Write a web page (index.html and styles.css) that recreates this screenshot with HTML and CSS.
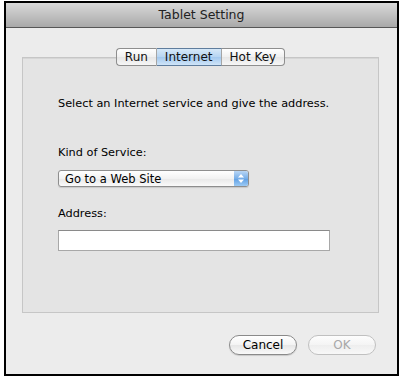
FILE: index.html
```html
<!DOCTYPE html>
<html>
<head>
<meta charset="utf-8">
<link rel="stylesheet" href="styles.css">
</head>
<body>
<div class="window">
  <div class="titlebar">Tablet Setting</div>
  <div class="content">
    <div class="tabs">
      <div class="tab">Run</div>
      <div class="tab selected">Internet</div>
      <div class="tab">Hot Key</div>
    </div>
    <div class="panel">
      <p class="intro">Select an Internet service and give the address.</p>
      <div class="label">Kind of Service:</div>
      <div class="popup">
        <span>Go to a Web Site</span>
        <span class="arrows">
          <svg width="8" height="11" viewBox="0 0 8 11"><path d="M4 1 L7 4.5 H1 Z M4 10 L7 6.5 H1 Z" fill="#fff"/></svg>
        </span>
      </div>
      <div class="label addr">Address:</div>
      <div class="field"></div>
    </div>
    <div class="buttons">
      <div class="btn">Cancel</div>
      <div class="btn disabled">OK</div>
    </div>
  </div>
</div>
</body>
</html>
```
FILE: styles.css
```css
html, body {
  margin: 0;
  padding: 0;
  background: #fff;
}
body {
  font-family: "DejaVu Sans", "Liberation Sans", sans-serif;
  font-size: 11.3px;
  color: #000;
}
.window {
  margin: 1px 0 0 4px;
  width: 391px;
  height: 371px;
  border: 2px solid #000;
  background: #ececec;
  display: flex;
  flex-direction: column;
}
.titlebar {
  height: 24px;
  line-height: 24px;
  text-align: center;
  font-size: 12.5px;
  color: #222;
  background: linear-gradient(#d9d9d9, #a9a9a9);
  border-bottom: 1px solid #575757;
}
.content {
  flex: 1;
  display: flex;
  flex-direction: column;
  padding: 20px 18px 0 16px;
}
.tabs {
  display: flex;
  justify-content: center;
  position: relative;
  z-index: 1;
  margin-bottom: -9px;
}
.tabs .tab {
  height: 16px;
  line-height: 16px;
  padding: 0 8px;
  background: linear-gradient(#ffffff, #f0f0f0 50%, #e6e6e6 51%, #f6f6f6);
  border-top: 1px solid #8e8e8e;
  border-bottom: 1px solid #8e8e8e;
  border-right: 1px solid #a5a5a5;
  font-size: 12px;
  color: #111;
}
.tabs .tab:first-child {
  border-left: 1px solid #8e8e8e;
  border-radius: 4px 0 0 4px;
}
.tabs .tab:last-child {
  border-radius: 0 4px 4px 0;
  border-right-color: #8e8e8e;
}
.tabs .tab.selected {
  background: linear-gradient(#d6e8f8, #b6d4f2 50%, #a2c8ee 51%, #cfe4f8);
  border-top-color: #5f7d9d;
  border-bottom-color: #5f7d9d;
}
.panel {
  height: 256px;
  box-sizing: border-box;
  background: #e4e4e4;
  border: 1px solid #c6c6c6;
  box-shadow: inset 0 1px 0 #d6d6d6;
  padding: 38px 0 0 35px;
}
.intro {
  margin: 0;
  line-height: 16px;
}
.label {
  margin-top: 33px;
  line-height: 16px;
}
.label.addr {
  margin-top: 19px;
}
.popup {
  box-sizing: border-box;
  margin-top: 9px;
  width: 191px;
  height: 17px;
  border: 1px solid #8e8e8e;
  border-radius: 3px;
  background: linear-gradient(#ffffff, #f2f2f2 50%, #e8e8e8 51%, #fafafa);
  display: flex;
  align-items: center;
  justify-content: space-between;
  padding-left: 6px;
  font-size: 11.5px;
  box-shadow: 0 1px 1px rgba(0,0,0,0.12);
}
.popup .arrows {
  width: 14px;
  height: 15px;
  border-radius: 0 2px 2px 0;
  background: linear-gradient(#b9d6f5, #77aee8 50%, #5f9fe4 51%, #9ccaf4);
  display: flex;
  align-items: center;
  justify-content: center;
}
.field {
  margin-top: 8px;
  width: 270px;
  height: 19px;
  background: #fff;
  border: 1px solid #a8a8a8;
  border-top-color: #8a8a8a;
}
.buttons {
  display: flex;
  justify-content: flex-end;
  gap: 11px;
  margin-top: 22px;
  padding-right: 3px;
}
.btn {
  width: 66px;
  height: 18px;
  line-height: 18px;
  text-align: center;
  border: 1px solid #8a8a8a;
  border-radius: 10px;
  background: linear-gradient(#ffffff, #f3f3f3 50%, #e6e6e6 51%, #f9f9f9);
  font-size: 12px;
  box-shadow: 0 1px 1px rgba(0,0,0,0.15);
}
.btn.disabled {
  color: #a8a8a8;
  border-color: #c0c0c0;
  background: linear-gradient(#fdfdfd, #f4f4f4 50%, #eeeeee 51%, #f8f8f8);
  box-shadow: none;
}
```
